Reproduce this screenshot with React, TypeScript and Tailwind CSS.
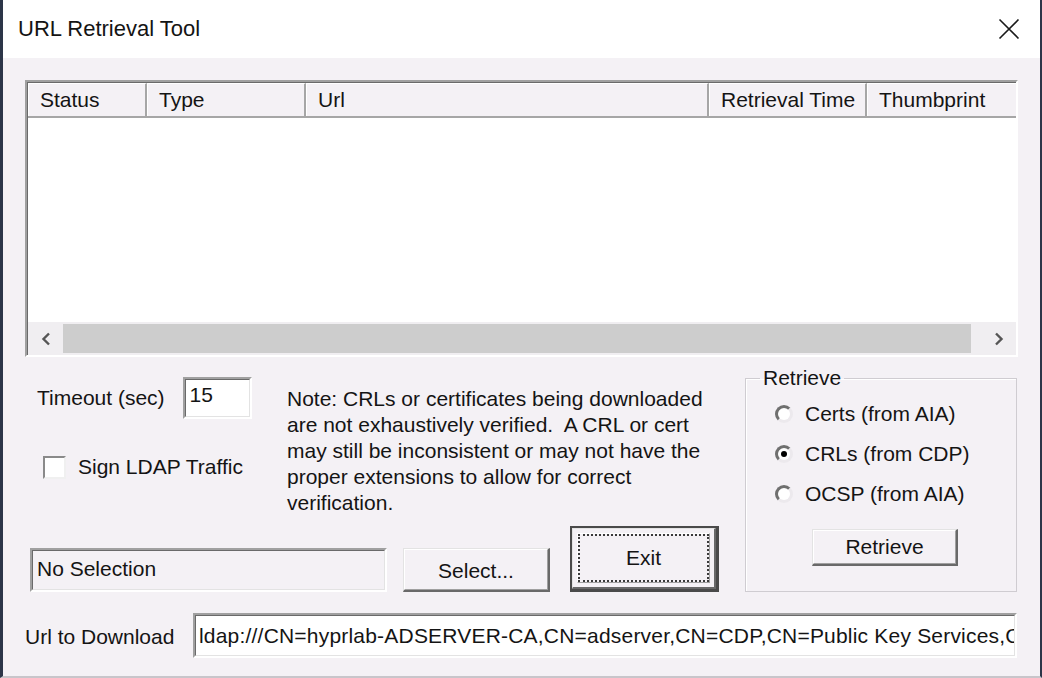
import React from "react";

// Classic Win32 dialog: "URL Retrieval Tool" (certutil -url), 200% scale.

const NOTE_LINES = [
  "Note: CRLs or certificates being downloaded",
  "are not exhaustively verified.  A CRL or cert",
  "may still be inconsistent or may not have the",
  "proper extensions to allow for correct",
  "verification.",
];

const COLUMNS = [
  { label: "Status", w: "w-[119px]" },
  { label: "Type", w: "w-[159px]" },
  { label: "Url", w: "w-[403px]" },
  { label: "Retrieval Time", w: "w-[158px]" },
];

const URL_TEXT =
  "ldap:///CN=hyprlab-ADSERVER-CA,CN=adserver,CN=CDP,CN=Public Key Services,CN=Services,CN=Configuration,DC=hyprlab,DC=local?certificateRevocationList?base?objectClass=cRLDistributionPoint";

export default function App() {
  return (
    <div className="w-[1042px] h-[678px] flex flex-col overflow-hidden bg-[#f4f1f5] border-l-[3px] border-r-[2px] border-b-[2px] border-l-[#2c3548] border-r-[#2c3548] border-b-[#c8c5ca] font-['Liberation_Sans',Arial,sans-serif] text-[21px] leading-[26px] text-[#141414]">
      {/* ---- Title bar ---- */}
      <div className="h-[58px] shrink-0 bg-white flex items-center justify-between pl-[15px] pr-[20px]">
        <span className="text-[22px]">URL Retrieval Tool</span>
        <svg width="22" height="22" viewBox="0 0 22 22" aria-hidden>
          <path d="M1.5 1.5 L20.5 20.5 M20.5 1.5 L1.5 20.5" stroke="#1a1a1a" strokeWidth="1.6" fill="none" />
        </svg>
      </div>

      <div className="flex flex-col pl-[22px] pr-[22px]">
        {/* ---- List view ---- */}
        <ListView />

        {/* ---- Middle section ---- */}
        <div className="mt-[20px] flex">
          <div className="w-[720px] flex flex-col">
            <div className="h-[149px] flex">
              <div className="w-[262px] flex flex-col">
                <div className="flex items-center pl-[12px]">
                  <span>Timeout (sec)</span>
                  <Sunken className="ml-[18px] w-[69px] h-[42px]" inner="bg-white items-start pt-[2px] pl-[4px]">
                    15
                  </Sunken>
                </div>
                <div className="mt-[35px] flex items-center pl-[18px]">
                  <div className="w-[23px] h-[23px] bg-white border-2 border-t-[#8a8a8a] border-l-[#8a8a8a] border-b-[#f0f0f0] border-r-[#f0f0f0]" />
                  <span className="ml-[12px]">Sign LDAP Traffic</span>
                </div>
              </div>
              <div className="pt-[9px] whitespace-pre">
                {NOTE_LINES.map((l) => (
                  <div key={l}>{l}</div>
                ))}
              </div>
            </div>

            <div className="flex items-end">
              <Sunken className="ml-[5px] w-[357px] h-[44px]" inner="items-center pl-[4px] pb-[2px]">
                No Selection
              </Sunken>
              <Button className="ml-[16px] w-[147px] h-[44px]">
                <span className="pt-[2px]">Select...</span>
              </Button>
              <div className="ml-[20px] w-[149px] h-[66px] border-2 border-[#4a4a4a] border-b-[3px] border-r-[3px]">
                <Button className="w-full h-full p-[4px]">
                  <div className="w-full h-full border-2 border-dotted border-[#3a3a3a] flex items-center justify-center">
                    Exit
                  </div>
                </Button>
              </div>
            </div>
          </div>

          {/* ---- Retrieve group ---- */}
          <fieldset className="-mt-[12px] w-[272px] h-[227px] border border-[#cfccd1] shadow-[inset_1px_1px_0_#ffffff]">
            <legend className="ml-[14px] px-[3px]">Retrieve</legend>
            <div className="pl-[29px] flex flex-col mt-[3px]">
              <Radio label="Certs (from AIA)" />
              <Radio label="CRLs (from CDP)" checked />
              <Radio label="OCSP (from AIA)" />
              <Button className="ml-[37px] mt-[15px] w-[146px] h-[37px]">Retrieve</Button>
            </div>
          </fieldset>
        </div>

        {/* ---- Url to download ---- */}
        <div className="mt-[21px] flex items-center">
          <span className="w-[168px] pt-[3px]">Url to Download</span>
          <Sunken className="w-[824px] h-[45px]" inner="bg-white items-center pl-[3px] overflow-hidden whitespace-nowrap">
            <span className="tracking-[0.2px]">{URL_TEXT}</span>
          </Sunken>
        </div>
      </div>
    </div>
  );
}

function ListView() {
  return (
    <div className="mt-[22px] h-[277px] w-[993px] border-2 border-t-[#a0a0a0] border-l-[#a0a0a0] border-b-white border-r-white">
      <div className="h-full flex flex-col border-t border-l border-t-[#6a6a6a] border-l-[#6a6a6a]">
        <div className="h-[35px] shrink-0 flex bg-[#f4f1f5] border-b-2 border-b-[#a6a6a6]">
          {COLUMNS.map((c) => (
            <div
              key={c.label}
              className={`${c.w} h-full shrink-0 flex items-center pl-[11px] border-r-2 border-r-[#a6a6a6] border-t border-t-white border-l border-l-white`}
            >
              {c.label}
            </div>
          ))}
          <div className="flex-1 h-full flex items-center pl-[11px] border-t border-t-white border-l border-l-white whitespace-nowrap overflow-hidden">
            Thumbprint
          </div>
        </div>
        <div className="flex-1 bg-white" />
        <div className="h-[33px] shrink-0 flex items-center bg-[#f0eef1]">
          <div className="w-[35px] h-full flex items-center justify-center">
            <svg width="10" height="14" viewBox="0 0 10 14" aria-hidden>
              <path d="M8 1.5 L2.5 7 L8 12.5" stroke="#555" strokeWidth="2.4" fill="none" />
            </svg>
          </div>
          <div className="w-[908px] h-[29px] bg-[#cdcdcd]" />
          <div className="flex-1 h-full flex items-center justify-end pr-[12px]">
            <svg width="10" height="14" viewBox="0 0 10 14" aria-hidden>
              <path d="M2 1.5 L7.5 7 L2 12.5" stroke="#555" strokeWidth="2.4" fill="none" />
            </svg>
          </div>
        </div>
      </div>
    </div>
  );
}

function Sunken({
  className,
  inner,
  children,
}: {
  className: string;
  inner: string;
  children?: React.ReactNode;
}) {
  return (
    <div className={`${className} border-2 border-t-[#a0a0a0] border-l-[#a0a0a0] border-b-white border-r-white`}>
      <div className={`h-full w-full flex border-t border-l border-t-[#6a6a6a] border-l-[#6a6a6a] border-b border-r border-b-[#e3e3e3] border-r-[#e3e3e3] ${inner}`}>
        {children}
      </div>
    </div>
  );
}

function Button({ className, children }: { className: string; children: React.ReactNode }) {
  return (
    <div className={`${className} bg-[#f4f1f5] border-t border-l border-t-[#e3e3e3] border-l-[#e3e3e3] border-b-2 border-r-2 border-b-[#696969] border-r-[#696969]`}>
      <div className="w-full h-full flex items-center justify-center border-t border-l border-t-white border-l-white border-b border-r border-b-[#a0a0a0] border-r-[#a0a0a0]">
        {children}
      </div>
    </div>
  );
}

function Radio({ label, checked }: { label: string; checked?: boolean }) {
  return (
    <div className="h-[40px] flex items-center">
      <div className="w-[18px] h-[18px] shrink-0 rounded-full bg-white border-[3px] border-t-[#6f6f6f] border-l-[#6f6f6f] border-b-[#ece9ed] border-r-[#ece9ed] flex items-center justify-center">
        {checked && <div className="w-[6px] h-[6px] rounded-full bg-black" />}
      </div>
      <span className="ml-[12px]">{label}</span>
    </div>
  );
}
